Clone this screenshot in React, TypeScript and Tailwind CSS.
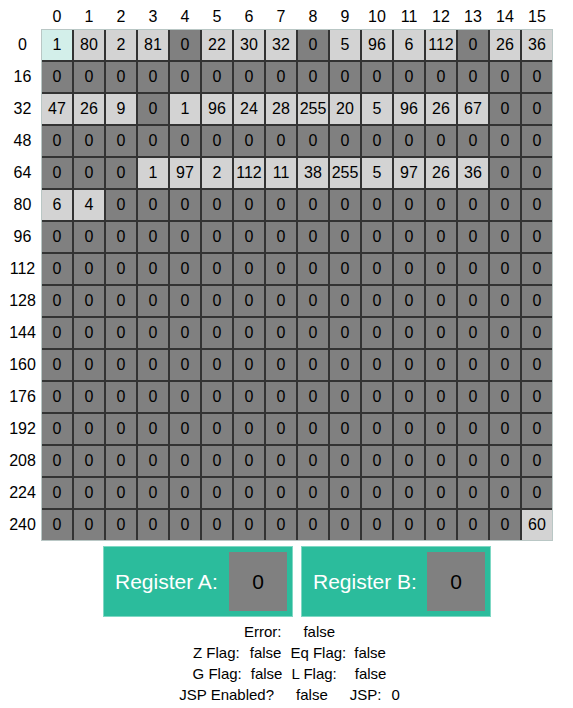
import { useState } from "react"

const makeMemory = () => {
  const mem = new Array(256).fill(0)
  const init: [number, number[]][] = [
    [0, [1, 80, 2, 81, 0, 22, 30, 32, 0, 5, 96, 6, 112, 0, 26, 36]],
    [32, [47, 26, 9, 0, 1, 96, 24, 28, 255, 20, 5, 96, 26, 67, 0, 0]],
    [64, [0, 0, 0, 1, 97, 2, 112, 11, 38, 255, 5, 97, 26, 36, 0, 0]],
    [80, [6, 4]],
  ]
  init.forEach(([start, vals]) => vals.forEach((v, i) => (mem[start + i] = v)))
  mem[255] = 60
  return mem
}

function Register({ name, value }: { name: string; value: number }) {
  return (
    <div className="flex h-[71px] w-[190px] items-center justify-between border border-[#7fd8c4] bg-[#2bbc9c] pl-[11px] pr-[5px]">
      <span className="text-[21px] text-white">{name}</span>
      <div className="flex h-[59px] w-[58px] items-center justify-center bg-[#808080] text-[21px] text-black">
        {value}
      </div>
    </div>
  )
}

export default function App() {
  const [memory] = useState(makeMemory)
  const [pc] = useState(0)
  const rows = Array.from({ length: 16 }, (_, r) => r * 16)

  return (
    <div className="min-h-screen w-[573px] bg-white pt-[5px] text-black" style={{ fontFamily: '"Liberation Sans", Arial, sans-serif' }}>
      <div className="flex h-[24px] items-center pl-[41px]">
        {rows.map((_, c) => (
          <div key={c} className="w-[32px] text-center text-[16px]">{c}</div>
        ))}
      </div>

      <div className="flex">
        <div className="flex w-[41px] flex-col pl-[4px]">
          {rows.map((r) => (
            <div key={r} className="flex h-[32px] items-center justify-center text-[16px]">{r}</div>
          ))}
        </div>
        <div className="grid grid-cols-[repeat(16,30px)] gap-[2px] border border-[#b9c7c5] bg-[#333333]">
          {memory.map((v, i) => (
            <div
              key={i}
              className={
                "flex h-[30px] items-center justify-center text-[16px] " +
                (i === pc ? "bg-[#d3efea]" : v !== 0 ? "bg-[#d3d3d3]" : "bg-[#808080]")
              }
            >
              {v}
            </div>
          ))}
        </div>
      </div>

      <div className="mt-[5px] ml-[41px] flex w-[512px] justify-center gap-[8px]">
        <Register name="Register A:" value={0} />
        <Register name="Register B:" value={0} />
      </div>

      <div className="mt-[4px] flex flex-col pl-[6px] text-[15px] leading-[21px]">
        <div className="flex justify-center">
          <span>Error:</span>
          <span className="ml-[22px]">false</span>
        </div>
        <div className="flex justify-center">
          <span>Z Flag:</span>
          <span className="ml-[10px]">false</span>
          <span className="ml-[9px]">Eq Flag:</span>
          <span className="ml-[8px]">false</span>
        </div>
        <div className="flex justify-center">
          <span>G Flag:</span>
          <span className="ml-[9px]">false</span>
          <span className="ml-[9px]">L Flag:</span>
          <span className="ml-[18px]">false</span>
        </div>
        <div className="flex justify-center">
          <span>JSP Enabled?</span>
          <span className="ml-[22px]">false</span>
          <span className="ml-[22px]">JSP:</span>
          <span className="ml-[10px]">0</span>
        </div>
      </div>
    </div>
  )
}
